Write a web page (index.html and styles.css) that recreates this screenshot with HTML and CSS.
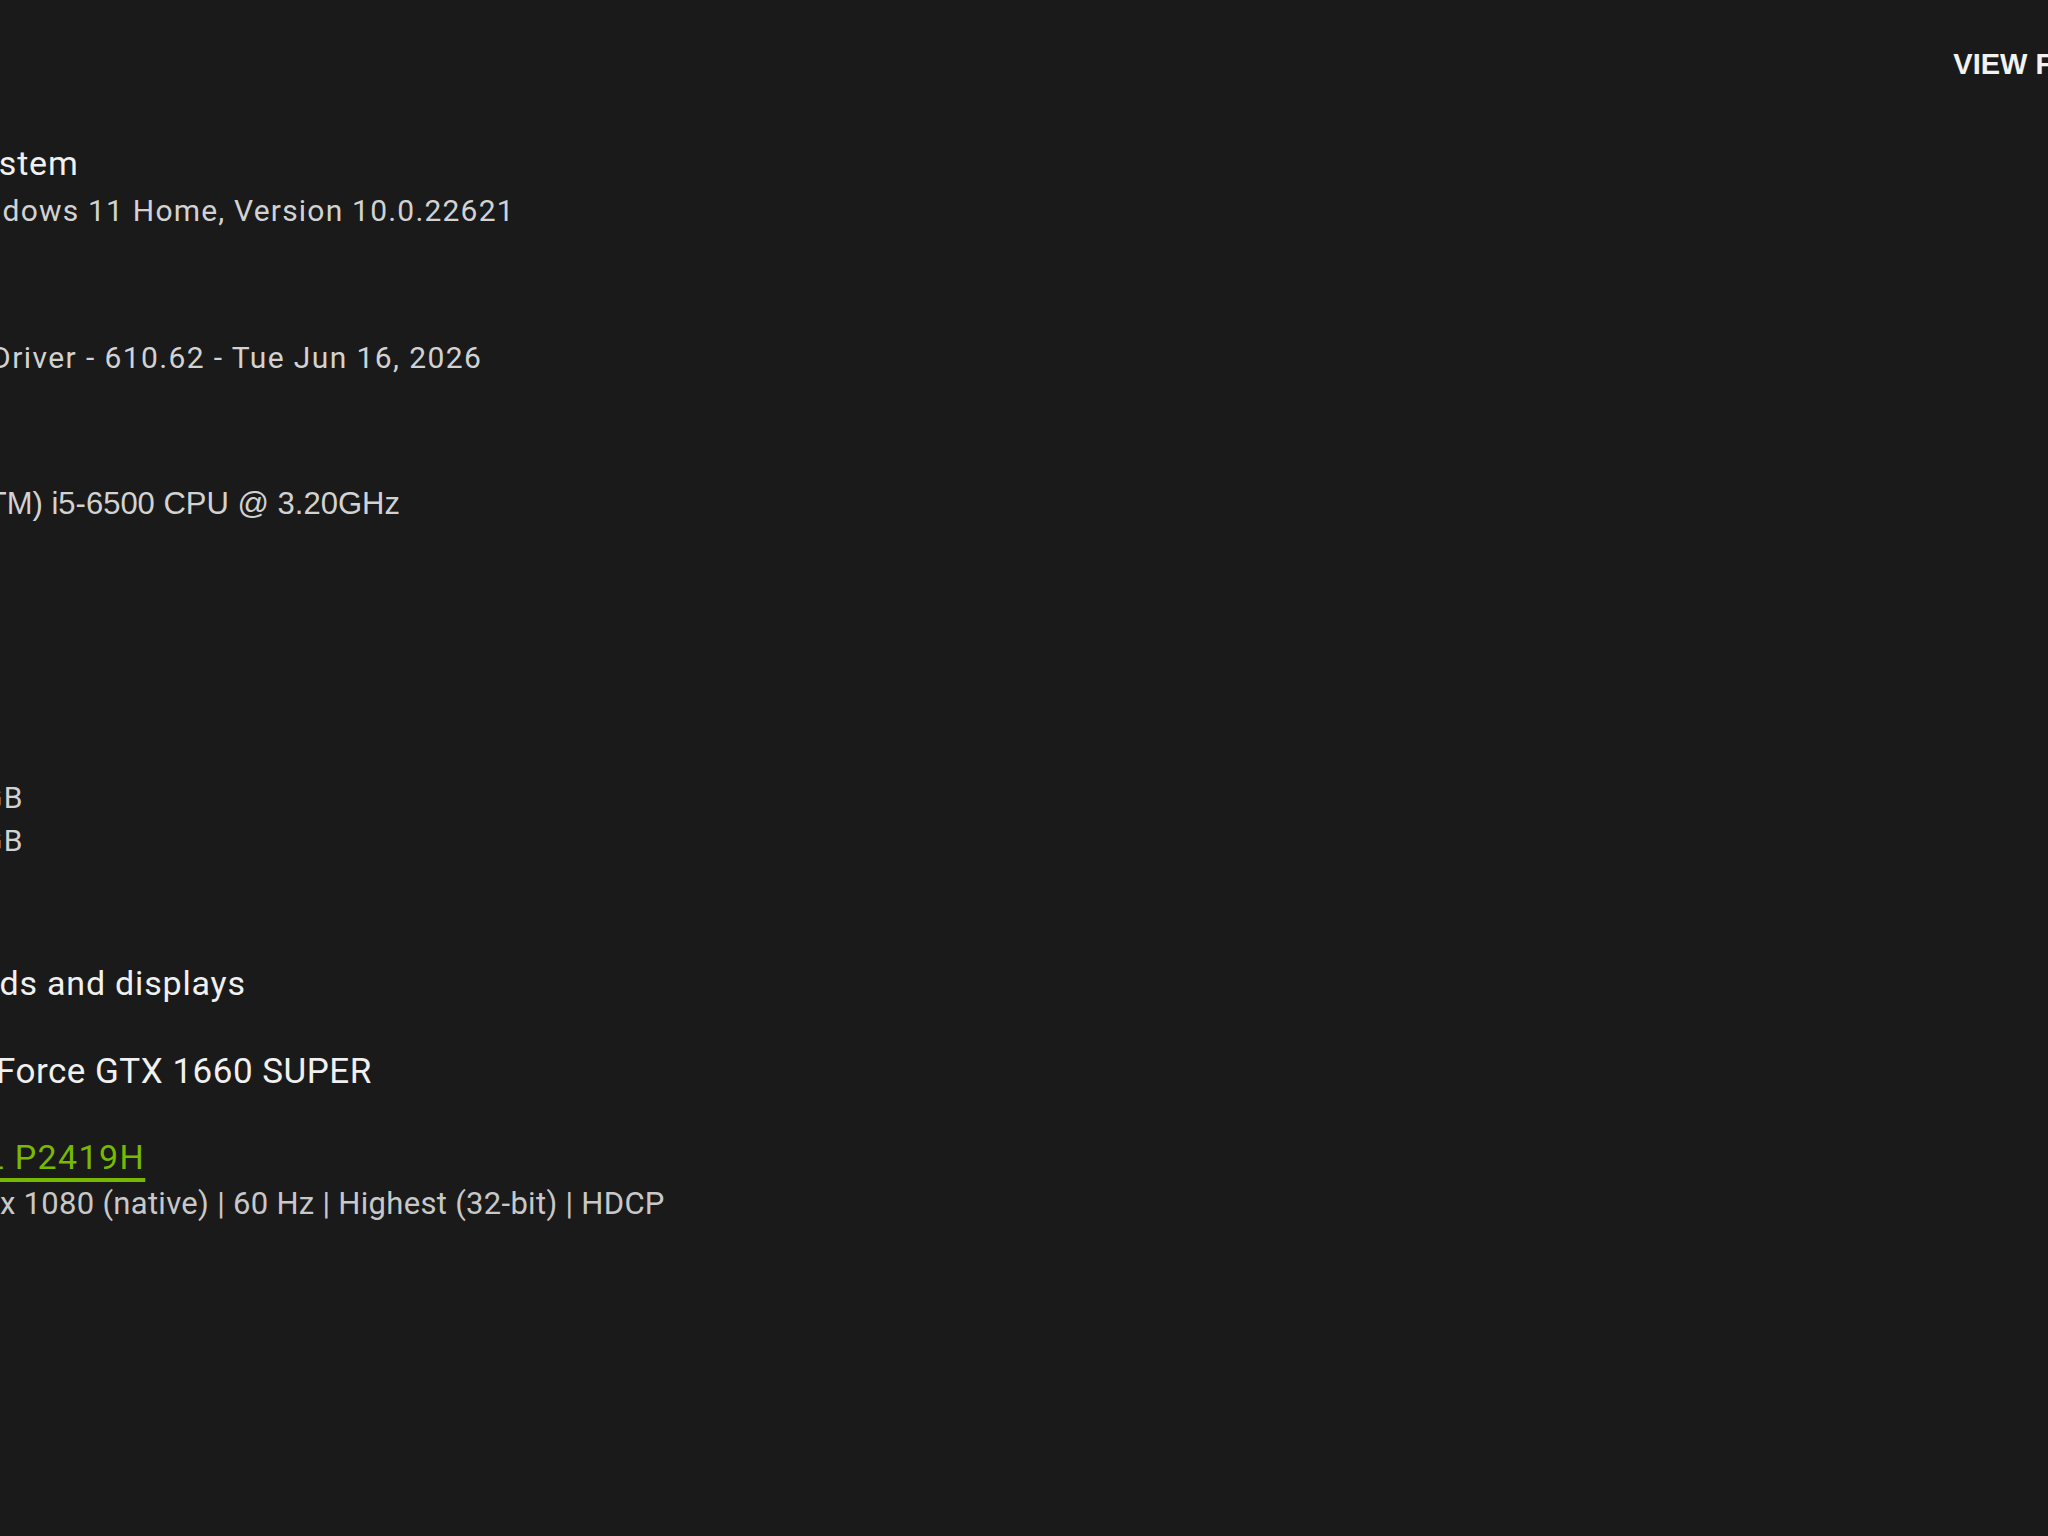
FILE: index.html
```html
<!DOCTYPE html>
<html lang="en">
<head>
    <meta charset="UTF-8">
    <title>System</title>
    <link rel="stylesheet" href="styles.css">
</head>
<body>
    <header class="topbar">
        <a class="report-link">VIEW FULL REPORT</a>
    </header>
    <main class="specs">
        <section class="spec">
            <h2>Operating system</h2>
            <p>Microsoft Windows 11 Home, Version 10.0.22621</p>
        </section>
        <section class="spec">
            <h2>Driver</h2>
            <p class="driver">Game Ready Driver - 610.62 - Tue Jun 16, 2026</p>
        </section>
        <section class="spec">
            <h2>CPU</h2>
            <p class="cpu">Intel(R) Core(TM) i5-6500 CPU @ 3.20GHz</p>
        </section>
        <section class="spec">
            <h2>Memory</h2>
            <p>16 GB</p>
        </section>
        <section class="spec">
            <h2>Storage</h2>
            <div class="drives">
                <span>C:</span><span>476.9 GB</span>
                <span>D:</span><span>931.5 GB</span>
            </div>
        </section>
        <section class="spec gpus">
            <h2>Graphics cards and displays</h2>
            <div class="gpu-name">NVIDIA GeForce GTX 1660 SUPER</div>
            <div class="display">
                <a class="display-name">DELL P2419H</a>
                <p class="display-info">1920 x 1080 (native) | 60 Hz | Highest (32-bit) | HDCP</p>
            </div>
        </section>
    </main>
</body>
</html>
```

FILE: styles.css
```css
*{
    margin: 0;
    padding: 0;
    box-sizing: border-box;
}
html, body{
    overflow: hidden;
}
body{
    width: 2048px;
    height: 1536px;
    background-color: #1a1a1a;
    color: #d2d2d2;
    font-family: Roboto, "Liberation Sans", sans-serif;
}
.topbar{
    display: flex;
    justify-content: flex-end;
    padding-top: 46px;
    height: 82px;
}
.report-link{
    margin-right: -190px;
    font-family: "Liberation Sans", Arial, sans-serif;
    font-weight: bold;
    font-size: 29px;
    line-height: 36px;
    color: #f2f2f2;
    white-space: nowrap;
}
.specs{
    margin-left: -200px;
    padding-top: 60px;
    display: flex;
    flex-direction: column;
    white-space: nowrap;
}
.spec + .spec{
    margin-top: 57px;
}
.spec h2{
    font-size: 34px;
    font-weight: 400;
    letter-spacing: 0.8px;
    line-height: 43px;
    color: #f0f0f0;
    margin-bottom: 4px;
}
.spec p{
    font-size: 30px;
    letter-spacing: 1.2px;
    line-height: 43px;
}
.spec .driver{
    letter-spacing: 1.4px;
}
.spec .cpu{
    font-family: "Liberation Sans", Arial, sans-serif;
    font-size: 31px;
    letter-spacing: 0;
    margin-top: -1px;
}
.drives{
    display: grid;
    grid-template-columns: 92px auto;
    font-size: 30px;
    letter-spacing: 1.2px;
    line-height: 43px;
}
.spec.gpus{
    margin-top: 100px;
}
.gpu-name{
    margin-top: 45px;
    padding-left: 28px;
    font-size: 35px;
    letter-spacing: 0.5px;
    line-height: 43px;
    color: #f0f0f0;
}
.display{
    margin-top: 43px;
    padding-left: 121px;
    display: flex;
    flex-direction: column;
    align-items: flex-start;
}
.display-name{
    font-size: 34px;
    letter-spacing: 1.4px;
    line-height: 43px;
    color: #76b900;
    text-decoration: underline;
    text-decoration-thickness: 4px;
    text-underline-offset: 9px;
}
.spec .display-info{
    margin-top: 3px;
    font-size: 31px;
    letter-spacing: 0.3px;
    color: #c8c8c8;
}
```
